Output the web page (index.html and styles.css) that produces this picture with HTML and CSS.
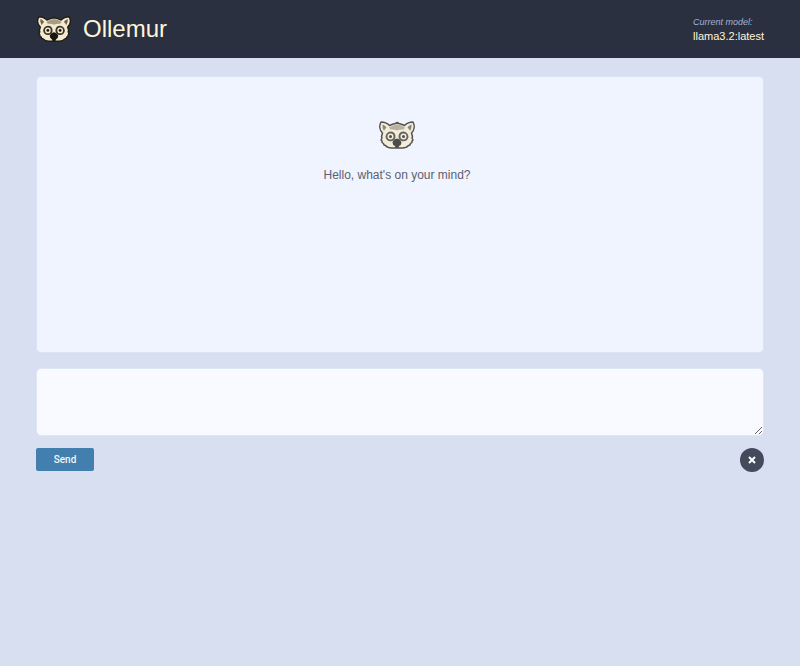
FILE: index.html
```html
<!DOCTYPE html>
<html lang="en">
<head>
<meta charset="utf-8">
<meta name="viewport" content="width=device-width, initial-scale=1">
<title>Ollemur</title>
<link rel="stylesheet" href="styles.css">
</head>
<body>
<svg class="defs" aria-hidden="true">
  <symbol id="lemur" viewBox="0 0 72 56">
    <path class="fur" d="M4 2C10 2 17 5 21 9Q27 6 33 5L35 3L36 5L38 3L39 5Q45 6 51 9C55 5 62 2 68 2C72 9 71 18 65 24L67 31L66 34L68 38L66 40L66 43L63 45L62 48L59 49Q55 54 47 54H25Q17 54 13 49L10 48L9 45L6 43L6 40L4 38L6 34L5 31L7 24C1 18 0 9 4 2Z"/>
    <path class="ear" d="M7 7Q13 9 15 13Q11 16 10 20Q6 14 7 7ZM65 7Q59 9 57 13Q61 16 62 20Q66 14 65 7Z"/>
    <path class="crown" d="M20 13Q27 8 36 7Q45 8 52 13L49 17Q42 16 36 19Q30 16 23 17Z"/>
    <path class="patch" d="M13 32Q14 22 23 21Q32 21 33 30Q33 38 27 40Q16 43 13 32ZM59 32Q58 22 49 21Q40 21 39 30Q39 38 45 40Q56 43 59 32Z"/>
    <circle class="iris" cx="23" cy="31" r="6"/>
    <circle class="iris" cx="49" cy="31" r="6"/>
    <circle class="pupil" cx="23" cy="31" r="3"/>
    <circle class="pupil" cx="49" cy="31" r="3"/>
    <path class="nose" d="M36 35Q43 36 45 43Q45 48 40 50L39 54H33L32 50Q27 48 27 43Q29 36 36 35Z"/>
  </symbol>
</svg>
<header class="topbar">
  <div class="brand">
    <svg class="brand-logo" aria-hidden="true"><use href="#lemur"/></svg>
    <h1 class="brand-name">Ollemur</h1>
  </div>
  <div class="model">
    <span class="model-label">Current model:</span>
    <span class="model-name">llama3.2:latest</span>
  </div>
</header>
<main class="page">
  <section class="chat">
    <svg class="chat-logo" aria-hidden="true"><use href="#lemur"/></svg>
    <p class="greeting">Hello, what's on your mind?</p>
  </section>
  <form class="composer">
    <textarea class="prompt" aria-label="Message"></textarea>
    <div class="actions">
      <button class="send" type="button">Send</button>
      <button class="clear" type="button" aria-label="Clear chat">
        <svg class="clear-icon" viewBox="0 0 8 8" aria-hidden="true"><path d="M1 1L7 7M7 1L1 7"/></svg>
      </button>
    </div>
  </form>
</main>
</body>
</html>
```
FILE: styles.css
```css
* {
  box-sizing: border-box;
}

body {
  margin: 0;
  min-height: 100vh;
  background: #d8dff1;
  font-family: "Liberation Sans", Arial, sans-serif;
}

.defs {
  position: absolute;
  width: 0;
  height: 0;
}

.topbar {
  display: flex;
  align-items: center;
  justify-content: space-between;
  height: 58px;
  padding: 0 36px 0 37px;
  background: #2a303f;
}

.brand {
  display: flex;
  align-items: center;
  gap: 12px;
}

.brand-logo {
  width: 34px;
  height: 28px;
}

.brand-name {
  margin: 0;
  color: #fdf5dc;
  font-size: 24px;
  font-weight: 400;
  line-height: 28px;
}

.model {
  display: flex;
  flex-direction: column;
  line-height: 14px;
}

.model-label {
  color: #a5b0d2;
  font-size: 9px;
  font-style: italic;
}

.model-name {
  color: #fdf5dc;
  font-size: 11px;
}

.page {
  padding: 18px 36px;
}

.chat {
  display: flex;
  flex-direction: column;
  align-items: center;
  gap: 18px;
  min-height: 277px;
  padding: 44px 6px 0 0;
  border: 1px solid #dae4f4;
  border-radius: 5px;
  background: #eff4fe;
}

.chat-logo {
  width: 36px;
  height: 28px;
  opacity: 0.75;
}

.greeting {
  margin: 0;
  color: #5b6172;
  font-size: 12px;
  line-height: 16px;
}

.composer {
  display: flex;
  flex-direction: column;
  gap: 12px;
  margin-top: 15px;
}

.prompt {
  display: block;
  width: 100%;
  height: 68px;
  padding: 8px;
  border: 1px solid #dfe6f5;
  border-radius: 5px;
  background: #f9faff;
  color: #2a303f;
  font: inherit;
  font-size: 12px;
  resize: vertical;
}

.actions {
  display: flex;
  align-items: flex-start;
  justify-content: space-between;
}

.send {
  width: 58px;
  height: 23px;
  padding: 0;
  border: 0;
  border-radius: 2px;
  background: #437fae;
  color: #f1f5fc;
  font-family: Roboto, sans-serif;
  font-size: 10px;
  font-weight: 500;
}

.clear {
  display: flex;
  align-items: center;
  justify-content: center;
  width: 24px;
  height: 24px;
  padding: 0;
  border: 0;
  border-radius: 50%;
  background: #424a5b;
}

.clear-icon {
  width: 8px;
  height: 8px;
  fill: none;
  stroke: #ffffff;
  stroke-width: 2;
}

.fur {
  fill: #f3ead0;
  stroke: #211e17;
  stroke-width: 3;
  stroke-linejoin: round;
}

.ear {
  fill: #6b6350;
}

.crown {
  fill: #a79d83;
}

.patch {
  fill: #3a352a;
}

.iris {
  fill: #f3ead0;
}

.pupil,
.nose {
  fill: #18160f;
}
```
